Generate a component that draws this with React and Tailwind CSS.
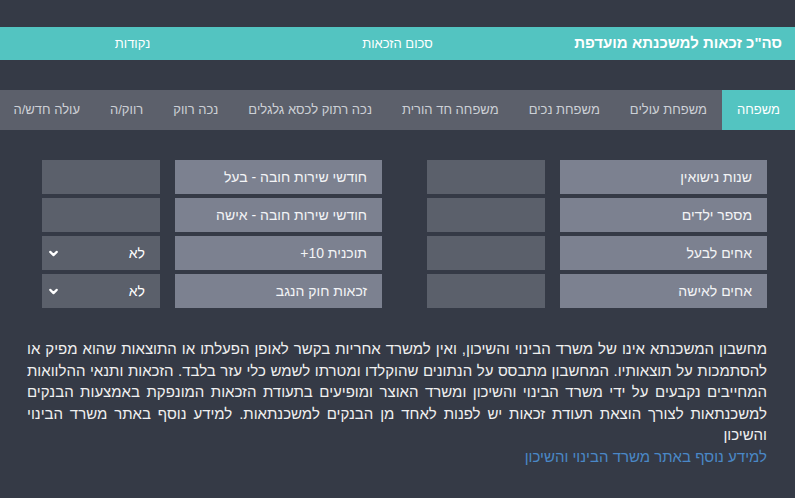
import { FiChevronDown } from 'react-icons/fi';

const tabs = [
  "משפחה",
  "משפחת עולים",
  "משפחת נכים",
  "משפחה חד הורית",
  "נכה רתוק לכסא גלגלים",
  "נכה רווק",
  "רווק/ה",
  "עולה חדש/ה"
];

const rightFields = [
  { label: "שנות נישואין" },
  { label: "מספר ילדים" },
  { label: "אחים לבעל" },
  { label: "אחים לאישה" }
];

const leftFields = [
  { label: "חודשי שירות חובה - בעל" },
  { label: "חודשי שירות חובה - אישה" },
  { label: "תוכנית 10+", select: "לא" },
  { label: "זכאות חוק הנגב", select: "לא" }
];

const FieldRow = ({ label, select }) => (
  <div className="flex h-[34px] gap-[15px]">
    <div className="flex-1 bg-[#7c8190] flex items-center pr-[15px] text-[14px] text-[#f3f4f6]">
      {label}
    </div>
    {select ? (
      <div className="w-[118px] bg-[#5b606b] flex items-center justify-between pr-[15px] pl-[5px] text-[14px] text-white">
        <span>{select}</span>
        <FiChevronDown size={13} strokeWidth={4} />
      </div>
    ) : (
      <div className="w-[118px] bg-[#5b606b]" />
    )}
  </div>
);

const App = () => {
  return (
    <div
      dir="rtl"
      className="min-h-[498px] bg-[#353a46] pt-[27px] pb-[30px]"
      style={{ fontFamily: '"Liberation Sans", Arial, sans-serif' }}
    >
      {/* Summary bar */}
      <div className="h-[33px] bg-[#53c4c1] grid grid-cols-3 items-center text-white">
        <div className="pr-[13px] text-[15px] font-bold whitespace-nowrap">סה"כ זכאות למשכנתא מועדפת</div>
        <div className="text-center text-[13px]">סכום הזכאות</div>
        <div className="text-center text-[13px]">נקודות</div>
      </div>

      {/* Tabs */}
      <div className="mt-[30px] h-[40px] bg-[#5c606b] flex items-stretch overflow-hidden">
        {tabs.map((tab, i) => (
          <div
            key={i}
            className={
              i === 0
                ? "px-[15px] flex items-center whitespace-nowrap text-[13px] bg-[#53c4c1] text-white"
                : "px-[15px] flex items-center whitespace-nowrap text-[13px] text-[#cdd0d6]"
            }
          >
            {tab}
          </div>
        ))}
      </div>

      {/* Fields */}
      <div className="mt-[30px] pr-[28px] pl-[42px] flex gap-[45px]">
        <div className="flex-1 flex flex-col gap-[4px]">
          {rightFields.map((f, i) => (
            <FieldRow key={i} {...f} />
          ))}
        </div>
        <div className="flex-1 flex flex-col gap-[4px]">
          {leftFields.map((f, i) => (
            <FieldRow key={i} {...f} />
          ))}
        </div>
      </div>

      {/* Disclaimer */}
      <div className="mt-[30px] pr-[28px] pl-[27px] text-[15px] leading-[21.6px] text-[#f0f0f0]">
        <p className="text-justify">
          מחשבון המשכנתא אינו של משרד הבינוי והשיכון, ואין למשרד אחריות בקשר לאופן הפעלתו או התוצאות שהוא מפיק או להסתמכות על תוצאותיו. המחשבון מתבסס על הנתונים שהוקלדו ומטרתו לשמש כלי עזר בלבד. הזכאות ותנאי ההלוואות המחייבים נקבעים על ידי משרד הבינוי והשיכון ומשרד האוצר ומופיעים בתעודת הזכאות המונפקת באמצעות הבנקים למשכנתאות לצורך הוצאת תעודת זכאות יש לפנות לאחד מן הבנקים למשכנתאות. למידע נוסף באתר משרד הבינוי והשיכון
        </p>
        <a href="#" className="text-[#4a88c7]">למידע נוסף באתר משרד הבינוי והשיכון</a>
      </div>
    </div>
  );
};

export default App;
